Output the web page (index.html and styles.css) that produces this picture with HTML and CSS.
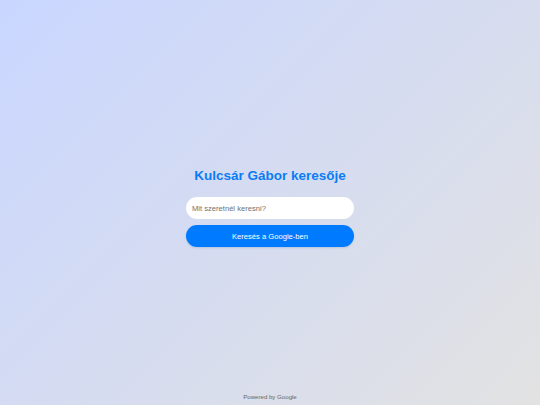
FILE: index.html
```html
<!DOCTYPE html>
<html lang="hu">
<head>
<meta charset="utf-8">
<title>Kulcsár Gábor keresője</title>
<link rel="stylesheet" href="styles.css">
</head>
<body>
<main class="main">
  <div class="search-box">
    <h1 class="title">Kulcsár Gábor keresője</h1>
    <input class="search-input" type="text" placeholder="Mit szeretnél keresni?">
    <button class="search-button" type="button">Keresés a Google-ben</button>
  </div>
</main>
<footer class="footer">Powered by Google</footer>
</body>
</html>
```

FILE: styles.css
```css
html, body {
  margin: 0;
  padding: 0;
  height: 100%;
}
body {
  font-family: "Liberation Sans", Arial, sans-serif;
  background: linear-gradient(135deg, #c9d6ff 0%, #e2e2e2 100%);
  display: flex;
  flex-direction: column;
  min-height: 100vh;
  box-sizing: border-box;
}
.main {
  flex: 1;
  display: flex;
  align-items: center;
  justify-content: center;
  padding-top: 23px;
}
.search-box {
  width: 168px;
  display: flex;
  flex-direction: column;
  align-items: stretch;
}
.title {
  margin: 0 0 13px 0;
  text-align: center;
  font-size: 13.5px;
  font-weight: bold;
  color: #0a7cf5;
  line-height: 16px;
  white-space: nowrap;
}
.search-input {
  height: 21.5px;
  box-sizing: border-box;
  border: none;
  border-radius: 11px;
  background: #fff;
  padding: 0 6px;
  font-family: "Liberation Sans", Arial, sans-serif;
  font-size: 7.6px;
  color: #333;
  outline: none;
}
.search-input::placeholder {
  color: #6f6f6f;
}
.search-button {
  margin-top: 6.5px;
  height: 21.5px;
  border: none;
  border-radius: 11px;
  background: #007bff;
  color: #fff;
  font-family: "Liberation Sans", Arial, sans-serif;
  font-size: 7.6px;
  cursor: pointer;
  box-shadow: 0 1px 2px rgba(0, 60, 140, 0.15);
}
.footer {
  text-align: center;
  font-size: 6.1px;
  color: #666;
  padding: 0 0 4px 0;
  line-height: 9px;
}
```
